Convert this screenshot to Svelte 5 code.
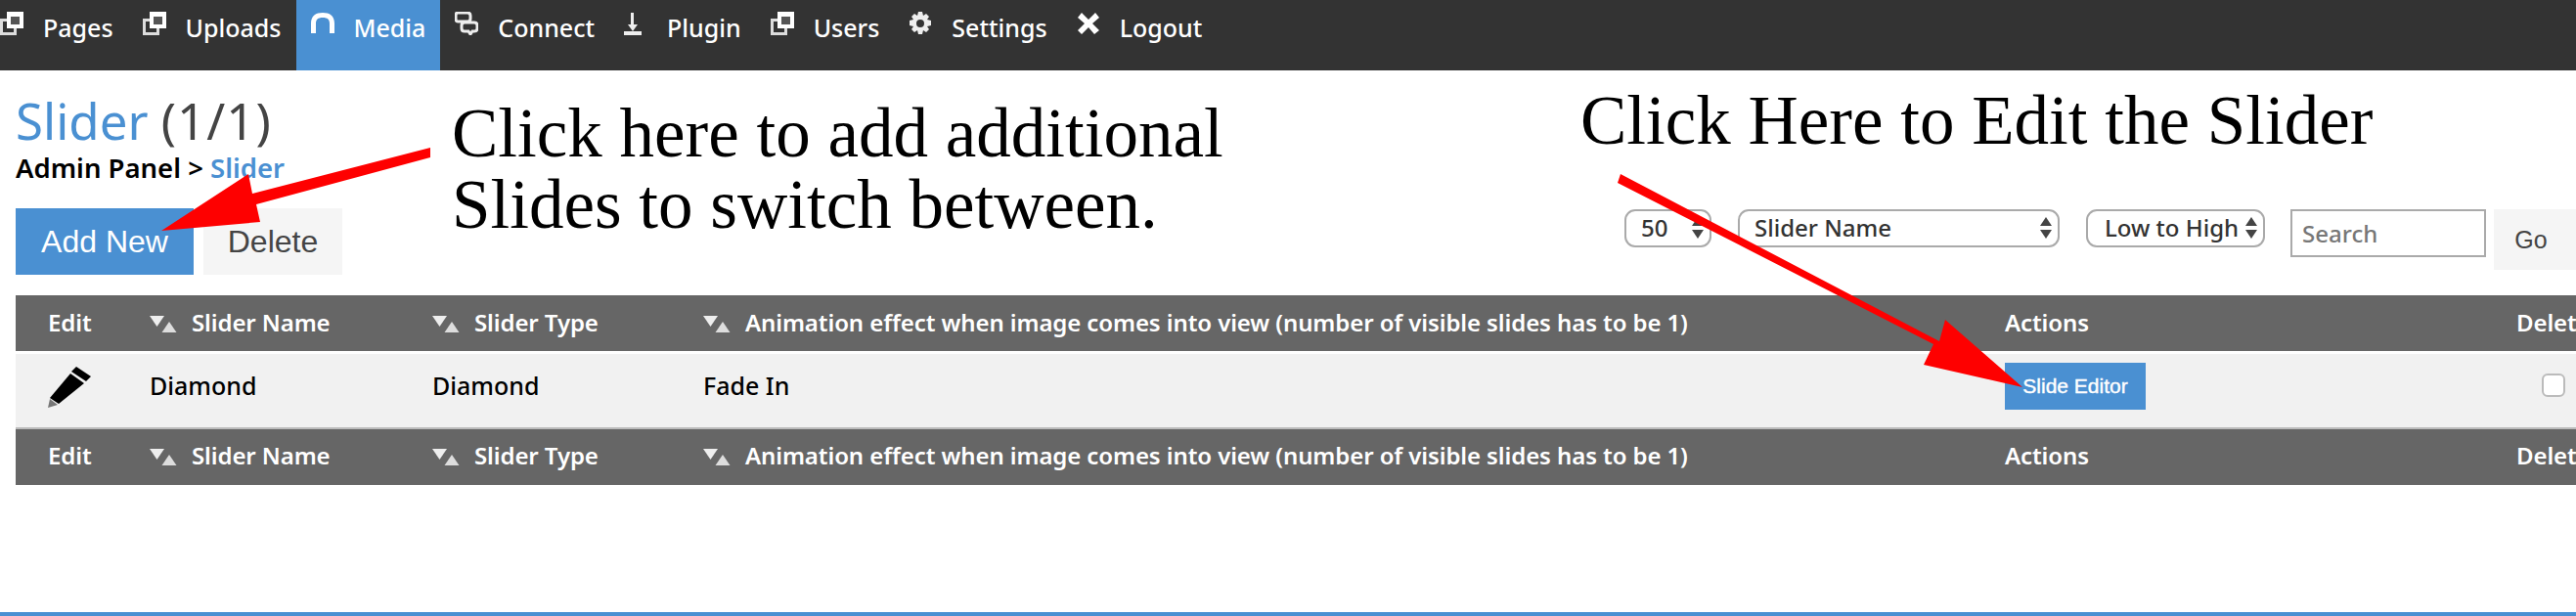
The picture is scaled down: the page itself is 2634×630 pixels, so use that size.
<script>
	const navItems = [
		{ label: 'Pages', icon: 'windows' },
		{ label: 'Uploads', icon: 'windows' },
		{ label: 'Media', icon: 'arch', active: true },
		{ label: 'Connect', icon: 'chat' },
		{ label: 'Plugin', icon: 'download' },
		{ label: 'Users', icon: 'windows' },
		{ label: 'Settings', icon: 'gear' },
		{ label: 'Logout', icon: 'close' }
	];
	const headers = ['Slider Name', 'Slider Type', 'Animation effect when image comes into view (number of visible slides has to be 1)'];
</script>

{#snippet navIcon(name)}
	<svg class="nav-icon" viewBox="0 0 24 24" width="24" height="24" aria-hidden="true">
		{#if name === 'windows'}
			<path fill="#ddd" fill-rule="evenodd" d="M0 7h17v17H0zM3 10v11h11V10z" />
			<path fill="#fff" fill-rule="evenodd" d="M7 0h17v17H7zM11 5v8h9V5z" />
			<path fill="#555" d="M11 5h9v8h-9z" />
		{:else if name === 'arch'}
			<path fill="#fff" d="M0 22V12C0 4 5 1 12 1s12 3 12 11v10h-5V12c0-4-2-6-7-6s-7 2-7 6v10z" />
		{:else if name === 'chat'}
			<path fill="none" stroke="#eee" stroke-width="3" d="M3 1h10q3 0 3 3v3q0 3-3 3H3Q1 10 1 7V4q0-3 2-3zM10 11h10q3 0 3 3v3q0 3-3 3h-2l-2 3-2-3h-4q-3 0-3-3v-3q0-3 3-3z" />
		{:else if name === 'download'}
			<path fill="#eee" d="M8 0h3v12h4l-5 7-5-7h3zM0 19h19v4H0z" transform="translate(-1 1)" />
		{:else if name === 'gear'}
			<path fill="#eee" fill-rule="evenodd" d="M10 0h4l1 4 3-2 3 3-2 3 4 1v5l-4 1 2 3-3 3-3-2-1 4h-4l-1-4-3 2-3-3 2-3-4-1V9l4-1-2-3 3-3 3 2zM12 8a4 4 0 1 0 0 8 4 4 0 0 0 0-8z" />
		{:else if name === 'close'}
			<path fill="#fff" d="M5 1l7 7 7-7 4 5-7 6 7 7-5 4-6-7-7 7-4-4 7-7-7-6z" />
		{/if}
	</svg>
{/snippet}

{#snippet sortIcon()}
	<svg class="sort" viewBox="0 0 28 17" width="28" height="17" aria-hidden="true">
		<path fill="#eee" d="M0 0h15l-7.500 11z" />
		<path fill="#ddd" d="M20 6l7.500 11h-15z" />
	</svg>
{/snippet}

{#snippet headRow()}
	<tr class="head">
		<th class="edit-col"><span class="edit-label">Edit</span></th>
		{#each headers as h}
			<th>{@render sortIcon()}{h}</th>
		{/each}
		<th>Actions</th>
		<th>Delete</th>
	</tr>
{/snippet}

<div class="page">
	<nav>
		{#each navItems as item}
			<a href="#top" class="nav-item" class:active={item.active}>
				{@render navIcon(item.icon)}
				<span>{item.label}</span>
			</a>
		{/each}
	</nav>

	<div class="top">
		<div class="heading">
			<h1><span class="accent">Slider</span> <span class="count">(1/1)</span></h1>
			<div class="crumb">Admin Panel &gt; <span class="accent">Slider</span></div>
			<div class="buttons">
				<button class="primary">Add New</button>
				<button class="plain">Delete</button>
			</div>
		</div>

		<div class="filters">
			<label class="sel sel-count"><select><option>50</option></select></label>
			<label class="sel sel-field"><select><option>Slider Name</option></select></label>
			<label class="sel sel-order"><select><option>Low to High</option></select></label>
			<input class="search" placeholder="Search" />
			<button class="plain go">Go</button>
		</div>
	</div>

	<table>
		<colgroup>
			<col style="width:137px" /><col style="width:289px" /><col style="width:277px" />
			<col style="width:1331px" /><col style="width:523px" /><col style="width:120px" />
		</colgroup>
		<thead>{@render headRow()}</thead>
		<tbody>
			<tr class="row">
				<td class="edit-col">
					<svg class="pencil" viewBox="0 0 44 42" width="44" height="42" aria-hidden="true">
						<path fill="#000" d="M29 0L44 10L39 15L24 5z" />
						<path fill="#000" d="M23 7L37 17L11 38L2 32z" />
						<path fill="#777" d="M2 33L10 39L0 42z" />
					</svg>
				</td>
				<td class="cell">Diamond</td>
				<td class="cell">Diamond</td>
				<td class="cell">Fade In</td>
				<td><button class="editor">Slide Editor</button></td>
				<td><input class="check" type="checkbox" /></td>
			</tr>
		</tbody>
		<tfoot>{@render headRow()}</tfoot>
	</table>

	<p class="note note-add">Click here to add additional<br />Slides to switch between.</p>
	<p class="note note-edit">Click Here to Edit the Slider</p>

	<svg class="arrows" width="2634" height="630" viewBox="0 0 2634 630" aria-hidden="true">
		<path fill="#fe0000" d="M440 151 L440 161 L262 209 L266 227 L165 236 L254 178 L258 198 Z" />
		<path fill="#fe0000" d="M1657 178 L1983 349 L1989 327 L2068 396 L1967 373 L1977 352 L1654 187 Z" />
	</svg>

	<div class="rule"></div>
</div>

<style>
	:global(body) {
		margin: 0;
		background: #fff;
	}
	.page {
		position: relative;
		width: 2634px;
		height: 630px;
		overflow: hidden;
		font-family: "Noto Sans", "DejaVu Sans", sans-serif;
		font-weight: 500;
		color: #000;
	}
	nav {
		display: flex;
		height: 72px;
		background: #333;
	}
	.nav-item {
		display: flex;
		gap: 20px;
		padding: 12px 15px 0;
		color: #fff;
		text-decoration: none;
		font-size: 25px;
		line-height: 32px;
	}
	.nav-item:first-child {
		padding-left: 0;
	}
	.nav-item.active {
		background: #4a90d2;
	}
	.nav-icon {
		display: block;
		flex: none;
	}
	.top {
		display: flex;
		justify-content: space-between;
		height: 230px;
		padding-left: 16px;
	}
	h1 {
		margin: 0;
		padding-top: 20px;
		font-size: 51px;
		line-height: 62px;
		font-weight: normal;
		color: #444;
	}
	.count {
		letter-spacing: 1px;
	}
	.accent {
		color: #4a90d2;
	}
	.crumb {
		font-size: 27.5px;
		line-height: 32px;
		font-weight: 600;
		margin-top: 2px;
	}
	.buttons {
		display: flex;
		gap: 10px;
		margin-top: 25px;
	}
	button {
		border: 0;
		font-family: "Liberation Sans", Arial, sans-serif;
	}
	.primary {
		width: 182px;
		height: 68px;
		background: #4a90d2;
		color: #fff;
		font-size: 32px;
	}
	.plain {
		background: #f5f5f5;
		color: #444;
	}
	.buttons .plain {
		width: 142px;
		height: 68px;
		font-size: 32px;
	}
	.filters {
		display: flex;
		align-items: flex-start;
		padding-top: 142px;
	}
	.sel {
		position: relative;
		display: block;
		height: 39px;
		margin-right: 27px;
	}
	.sel::before,
	.sel::after {
		content: '';
		position: absolute;
		right: 8px;
		border-left: 6px solid transparent;
		border-right: 6px solid transparent;
	}
	.sel::before {
		top: 8px;
		border-bottom: 9px solid #444;
	}
	.sel::after {
		top: 21px;
		border-top: 9px solid #444;
	}
	select {
		appearance: none;
		display: block;
		width: 100%;
		height: 39px;
		box-sizing: border-box;
		border: 2px solid #aaa;
		border-radius: 11px;
		background: #fff;
		color: #333;
		font: inherit;
		font-size: 24px;
		padding: 0 0 2px 15px;
	}
	.sel-count { width: 89px; }
	.sel-field { width: 329px; }
	.sel-order { width: 183px; margin-right: 26px; }
	.sel-order select { padding-left: 17px; }
	.search {
		width: 200px;
		height: 49px;
		box-sizing: border-box;
		border: 2px solid #aaa;
		padding: 0 10px;
		font: inherit;
		font-size: 24px;
	}
	.search::placeholder {
		color: #777;
	}
	.go {
		width: 84px;
		height: 62px;
		margin-left: 8px;
		font-size: 25px;
		padding: 0 8px 0 0;
	}
	table {
		table-layout: fixed;
		width: 2677px;
		margin-left: 16px;
		border-collapse: collapse;
		font-size: 25px;
	}
	.head {
		background: #666;
		color: #fff;
		height: 58px;
	}
	th {
		padding: 0 0 2px;
		text-align: left;
		font-weight: 600;
		font-size: 24px;
		letter-spacing: -0.1px;
		white-space: nowrap;
	}
	tfoot th {
		padding-bottom: 5px;
	}
	.edit-label {
		padding-left: 33px;
	}
	.sort {
		margin-right: 15px;
		vertical-align: -1px;
	}
	.row {
		height: 78px;
		background: #f1f1f1;
		border-top: 3px solid #fff;
		border-bottom: 2px solid #bbb;
	}
	td {
		padding: 0;
		vertical-align: top;
	}
	td.cell {
		padding-top: 15px;
	}
	.pencil {
		display: block;
		margin: 13px 0 0 33px;
	}
	.editor {
		display: block;
		width: 144px;
		height: 48px;
		margin-top: 9px;
		background: #4a90d2;
		color: #fff;
		font-size: 21px;
		-webkit-text-stroke: 0.4px #fff;
		padding: 0;
	}
	.check {
		appearance: none;
		display: block;
		width: 24px;
		height: 24px;
		margin: 20px 0 0 26px;
		border: 2px solid #bbb;
		border-radius: 6px;
		background: #fff;
	}
	.note {
		position: absolute;
		margin: 0;
		font-family: "Liberation Serif", "Times New Roman", serif;
		font-weight: normal;
		font-size: 71px;
		line-height: 73px;
		color: #000;
		white-space: nowrap;
	}
	.note-add {
		left: 462px;
		top: 100px;
	}
	.note-edit {
		left: 1616px;
		top: 87px;
	}
	.arrows {
		position: absolute;
		left: 0;
		top: 0;
		pointer-events: none;
	}
	.rule {
		position: absolute;
		left: 0;
		right: 0;
		bottom: 0;
		height: 4px;
		background: #4a90d2;
	}
</style>
